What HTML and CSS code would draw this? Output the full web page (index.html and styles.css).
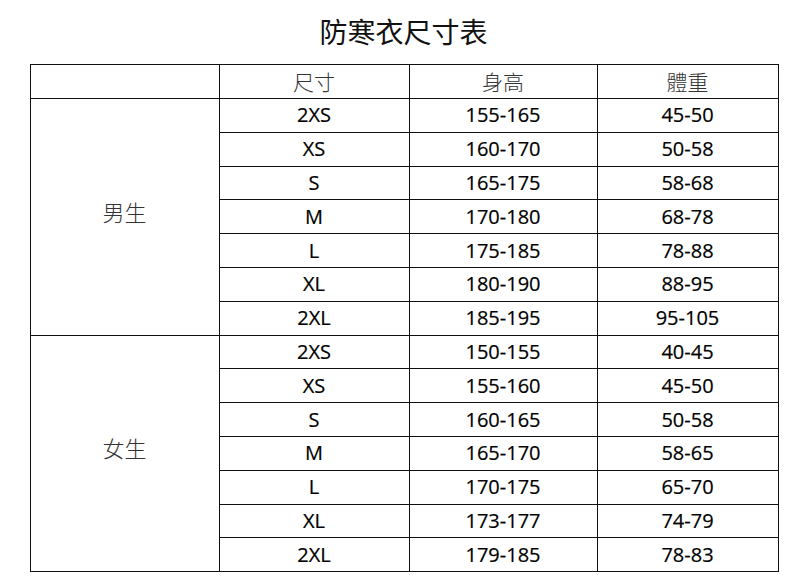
FILE: index.html
```html
<!DOCTYPE html>
<html lang="zh-Hant">
<head>
<meta charset="utf-8">
<link rel="stylesheet" href="styles.css">
</head>
<body>
<div class="page">
  <h1 class="title">防寒衣尺寸表</h1>
  <table class="size-table">
    <colgroup>
      <col class="c-group"><col class="c-size"><col class="c-height"><col class="c-weight">
    </colgroup>
    <thead>
      <tr><th></th><th>尺寸</th><th>身高</th><th>體重</th></tr>
    </thead>
    <tbody>
      <tr><td class="group" rowspan="7">男生</td><td>2XS</td><td>155-165</td><td>45-50</td></tr>
      <tr><td>XS</td><td>160-170</td><td>50-58</td></tr>
      <tr><td>S</td><td>165-175</td><td>58-68</td></tr>
      <tr><td>M</td><td>170-180</td><td>68-78</td></tr>
      <tr><td>L</td><td>175-185</td><td>78-88</td></tr>
      <tr><td>XL</td><td>180-190</td><td>88-95</td></tr>
      <tr><td>2XL</td><td>185-195</td><td>95-105</td></tr>
      <tr><td class="group" rowspan="7">女生</td><td>2XS</td><td>150-155</td><td>40-45</td></tr>
      <tr><td>XS</td><td>155-160</td><td>45-50</td></tr>
      <tr><td>S</td><td>160-165</td><td>50-58</td></tr>
      <tr><td>M</td><td>165-170</td><td>58-65</td></tr>
      <tr><td>L</td><td>170-175</td><td>65-70</td></tr>
      <tr><td>XL</td><td>173-177</td><td>74-79</td></tr>
      <tr><td>2XL</td><td>179-185</td><td>78-83</td></tr>
    </tbody>
  </table>
</div>
</body>
</html>
```

FILE: styles.css
```css
html, body {
  margin: 0;
  padding: 0;
  background: #ffffff;
}

.page {
  width: 807px;
  height: 582px;
  display: flex;
  flex-direction: column;
  align-items: center;
}

.title {
  margin: 0;
  height: 64px;
  display: flex;
  align-items: center;
  justify-content: center;
  font-family: "Noto Sans CJK TC", "Noto Sans CJK SC", sans-serif;
  font-weight: 400;
  font-size: 28px;
  color: #111111;
  padding-bottom: 2px;
  box-sizing: border-box;
}

.size-table {
  border-collapse: collapse;
  table-layout: fixed;
  width: 748px;
  margin-left: 1px;
}

.c-group { width: 189px; }
.c-size { width: 190px; }
.c-height { width: 188px; }
.c-weight { width: 181px; }

.size-table th,
.size-table td {
  border: 1.5px solid #111111;
  padding: 0;
  text-align: center;
  vertical-align: middle;
}

.size-table th {
  height: 33px;
  font-family: "Noto Sans CJK TC", "Noto Sans CJK SC", sans-serif;
  font-weight: 300;
  font-size: 21px;
  color: #333333;
  line-height: 1;
}

.size-table td {
  height: 32.8px;
  font-family: "Open Sans", "Liberation Sans", sans-serif;
  font-size: 20px;
  color: #000000;
  line-height: 1;
  -webkit-text-stroke: 0.2px #000000;
}

.size-table td.group {
  font-family: "Noto Sans CJK TC", "Noto Sans CJK SC", sans-serif;
  font-weight: 300;
  font-size: 22px;
  color: #333333;
  padding-bottom: 12px;
  -webkit-text-stroke: 0;
}
```
